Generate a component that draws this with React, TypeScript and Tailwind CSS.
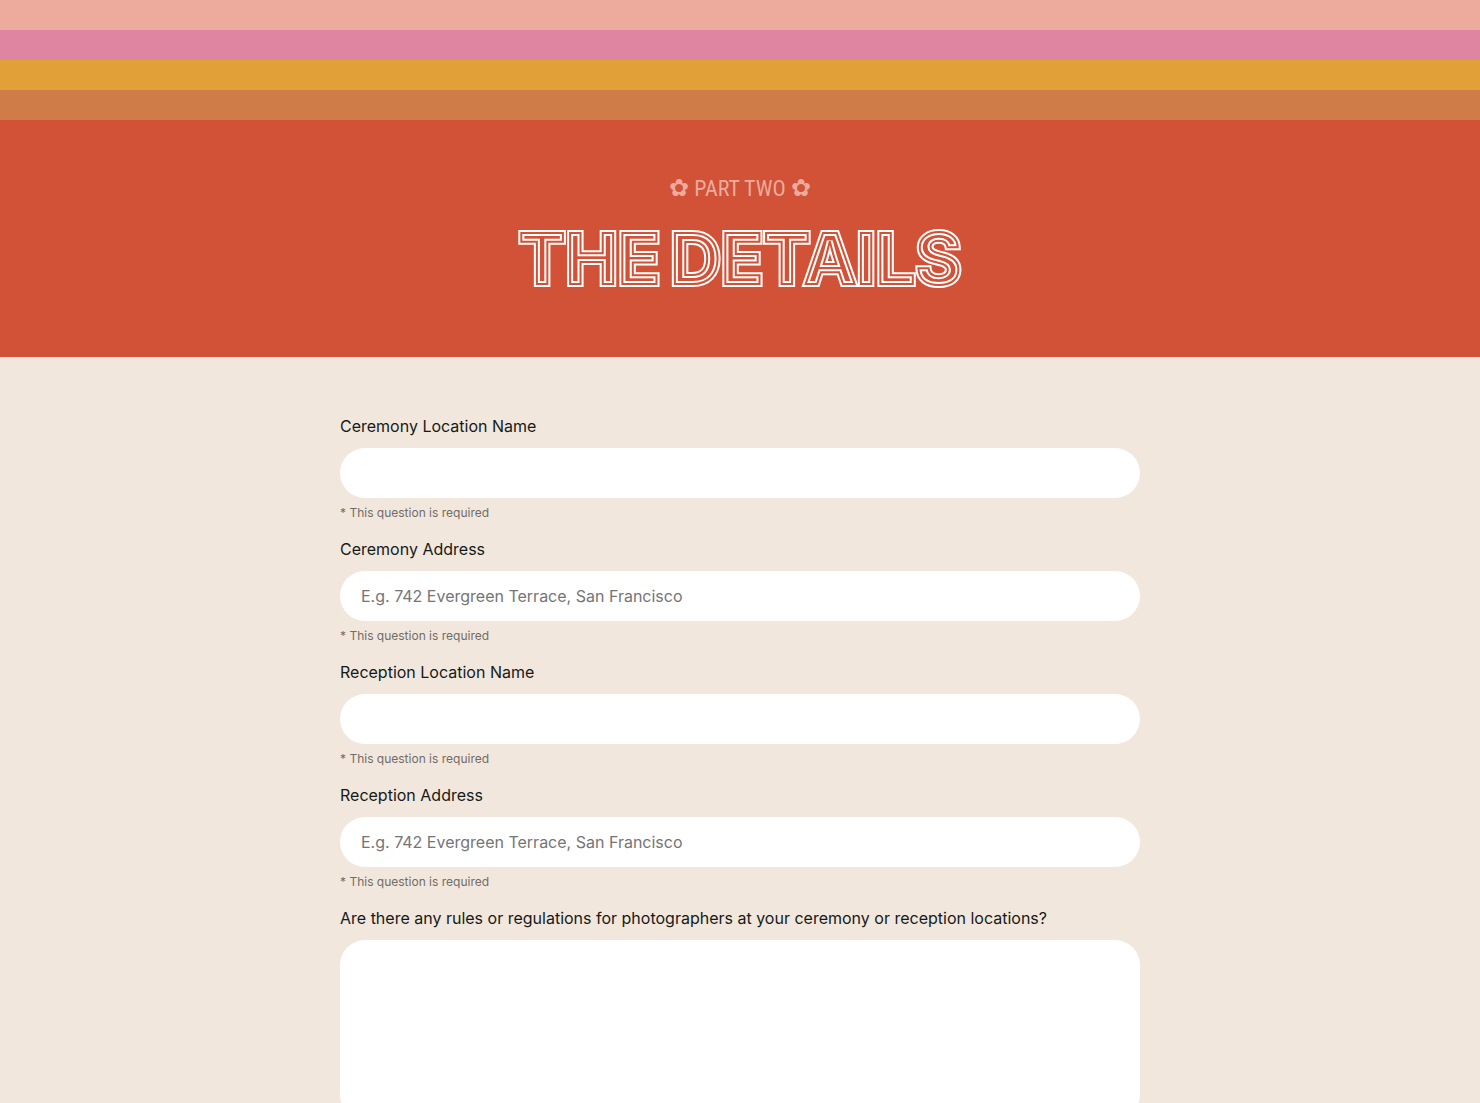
type Field = {
  id: string;
  label: string;
  placeholder?: string;
};

const fields: Field[] = [
  { id: 'ceremony-name', label: 'Ceremony Location Name' },
  {
    id: 'ceremony-address',
    label: 'Ceremony Address',
    placeholder: 'E.g. 742 Evergreen Terrace, San Francisco',
  },
  { id: 'reception-name', label: 'Reception Location Name' },
  {
    id: 'reception-address',
    label: 'Reception Address',
    placeholder: 'E.g. 742 Evergreen Terrace, San Francisco',
  },
];

const stripes = ['bg-[#edab9d]', 'bg-[#df84a1]', 'bg-[#e1a138]', 'bg-[#d07c48]'];

function Stripes() {
  return (
    <div aria-hidden="true">
      {stripes.map((color) => (
        <div key={color} className={`h-[30px] ${color}`} />
      ))}
    </div>
  );
}

// The white stroke is split by a thinner one, which gives multi-line retro lettering.
function InlineWord({ text }: { text: string }) {
  return (
    <span
      data-text={text}
      className="relative text-[#d15237] [-webkit-text-stroke:6px_white] after:absolute after:top-0 after:left-0 after:text-transparent after:content-[attr(data-text)/''] after:[-webkit-text-stroke:2px_#d15237]"
    >
      {text}
    </span>
  );
}

function TextField({ id, label, placeholder }: Field) {
  return (
    <div>
      <label htmlFor={id} className="block text-base leading-6">
        {label}
      </label>
      <input
        id={id}
        type="text"
        required
        placeholder={placeholder}
        aria-describedby={`${id}-hint`}
        className="mt-[10px] block h-[50px] w-full rounded-[25px] bg-white px-[21px] text-base outline-none placeholder:text-[#757575]"
      />
      <p id={`${id}-hint`} className="mt-[6px] text-xs leading-[18px] text-[#716c68]">
        * This question is required
      </p>
    </div>
  );
}

export default function App() {
  return (
    <div className="min-h-screen bg-[#f1e7dc] font-[Inter,sans-serif] text-[#151a1a]">
      <Stripes />
      <header className="flex flex-col items-center bg-[#d15237] pt-[50px] pb-[58px]">
        <p className="font-['Roboto_Condensed','Roboto',sans-serif] text-2xl leading-9 text-[#edab9d]">
          ✿ <span className="text-[22px]">PART TWO</span> ✿
        </p>
        <h1 className="mt-3 flex flex-wrap justify-center gap-x-[10px] text-[70px] leading-[80px] font-bold">
          <InlineWord text="THE" /> <InlineWord text="DETAILS" />
        </h1>
      </header>
      <main className="mx-auto max-w-[840px] px-5 pt-[57px] pb-16">
        <form className="flex flex-col gap-[15px]">
          {fields.map((field) => (
            <TextField key={field.id} {...field} />
          ))}
          <div>
            <label htmlFor="rules" className="block text-base leading-6">
              Are there any rules or regulations for photographers at your ceremony or reception locations?
            </label>
            <textarea
              id="rules"
              className="mt-[10px] block h-[180px] w-full resize-none rounded-[25px] bg-white px-[21px] py-4 text-base outline-none"
            />
          </div>
        </form>
      </main>
    </div>
  );
}
